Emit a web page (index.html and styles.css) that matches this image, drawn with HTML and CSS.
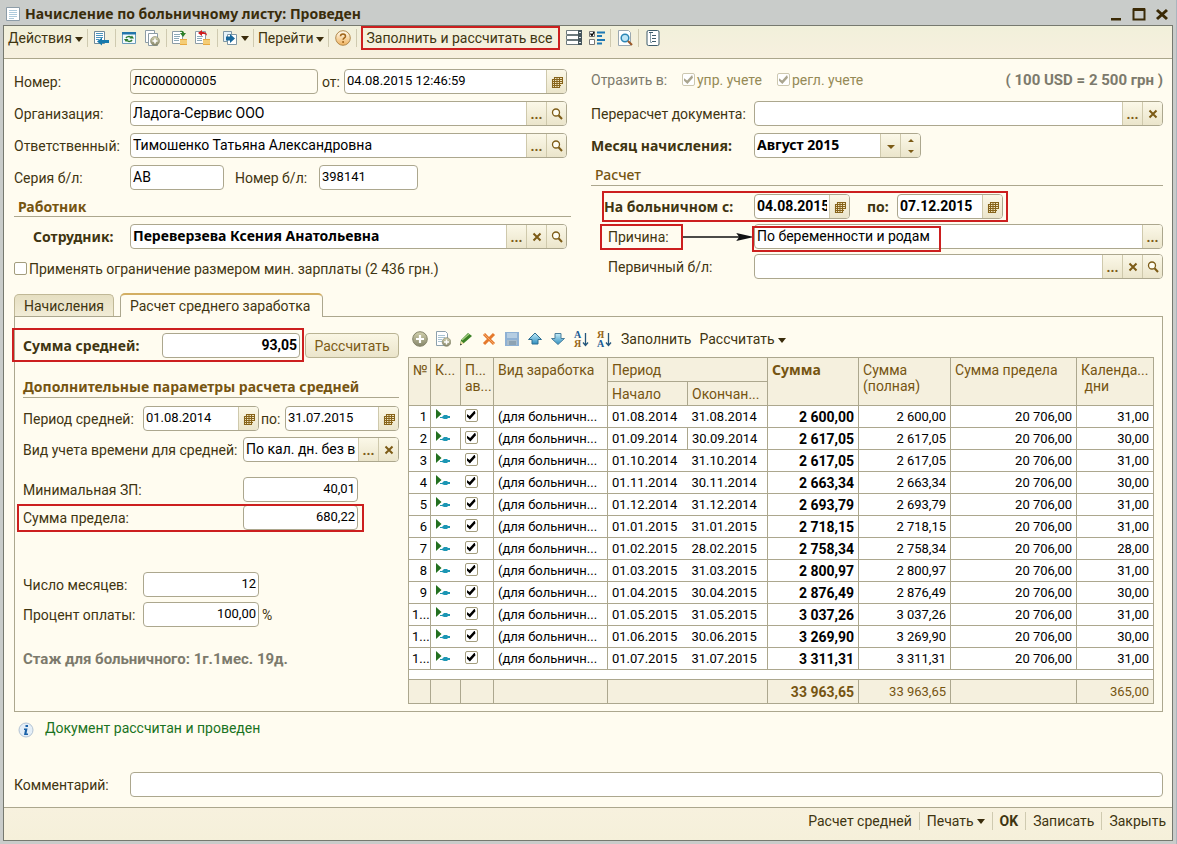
FILE: index.html
```html
<!DOCTYPE html>
<html lang="ru">
<head>
<meta charset="utf-8">
<title>Начисление по больничному листу: Проведен</title>
<link rel="stylesheet" href="styles.css">
</head>
<body>
<svg class="defs" aria-hidden="true">
  <defs>
    <linearGradient id="blue" x1="0" y1="0" x2="0" y2="1"><stop offset="0" stop-color="#c4ecf8"/><stop offset="1" stop-color="#2f8fc0"/></linearGradient>
    <linearGradient id="khaki" x1="0" y1="0" x2="0" y2="1"><stop offset="0" stop-color="#d3d2ae"/><stop offset="1" stop-color="#85856a"/></linearGradient>
    <linearGradient id="peach" x1="0" y1="0" x2="0" y2="1"><stop offset="0" stop-color="#fffdf2"/><stop offset="1" stop-color="#f0b25e"/></linearGradient>
  </defs>
  <symbol id="i-cal" viewBox="0 0 12 12"><path d="M3.500 1h8v8h-2v2h-8V3h2z" fill="#f6ecc9"/><path d="M3 1.500h9M1 3.500h11M1 5.500h11M1 7.500h11M1 9.500h9M1 11.500h8M1.500 3v9M3.500 1v11M6 1v11M8.500 1v11M11.500 1v7" stroke="#86631a" stroke-width="1.100"/></symbol>
  <symbol id="i-lens" viewBox="0 0 12 12"><circle cx="5" cy="4.500" r="3.500" fill="#fffef4" stroke="#7c5b16" stroke-width="1.300"/><path d="M7.500 7.200L11 11" stroke="#7c5b16" stroke-width="2"/></symbol>
  <symbol id="i-x" viewBox="0 0 12 12"><path d="M2.500 2.500l7 7M9.500 2.500l-7 7" stroke="#7c5b16" stroke-width="2"/></symbol>
  <symbol id="i-page" viewBox="0 0 16 16"><path d="M1.500 1.500h13v13h-13z" fill="#fff" stroke="#8d9da8"/><path d="M4 4.500h8M4 6.500h8M4 8.500h8M4 10.500h8M4 12.500h5" stroke="#aecbdc"/></symbol>
  <symbol id="i-mark" viewBox="0 0 16 12"><path d="M1 0l5.500 5L1 10z" fill="#23701f"/><path d="M5 8h2l2-2h3l1 1h2v2h-2l-1 1H9L7 9H5z" fill="#1c96b4"/></symbol>
</svg>
<div class="window">
  <header class="titlebar">
    <svg class="ico"><use href="#i-page"/></svg>
    <h1 class="title">Начисление по больничному листу: Проведен</h1>
    <div class="winctl">
      <button type="button" aria-label="Свернуть"><svg width="14" height="14"><path d="M2 11h10v2.500H2z" fill="#3b2a06"/></svg></button>
      <button type="button" aria-label="Развернуть"><svg width="14" height="14"><path d="M1.500 2.500h11v10h-11z" fill="none" stroke="#3b2a06" stroke-width="2"/><path d="M1 1h12v3H1z" fill="#3b2a06"/></svg></button>
      <button type="button" aria-label="Закрыть окно"><svg width="14" height="14"><path d="M2 3l10 9M12 3L2 12" stroke="#3b2a06" stroke-width="3"/></svg></button>
    </div>
  </header>
  <div class="body">
    <nav class="toolbar">
      <button type="button" class="cmd drop">Действия</button>
      <span class="sep"></span>
      <button type="button" class="tool" aria-label="Записать и закрыть"><svg class="ico" viewBox="0 0 16 16"><path d="M1.500 1.500h10v12h-10z" fill="#fff" stroke="#6f8a99"/><path d="M3 3.500h7M3 5.500h7M3 7.500h7M3 9.500h3" stroke="#4b94bd"/><path d="M4 11.500l5-4V10h7v3H9v2.500z" fill="#1579ad"/></svg></button>
      <span class="sep"></span>
      <button type="button" class="tool" aria-label="Обновить"><svg class="ico" viewBox="0 0 16 16"><path d="M1.500 2.500h13v11h-13z" fill="#f3faff" stroke="#6d9dbb"/><path d="M1 2h14v2.500H1z" fill="#2476ab"/><path d="M5 8c1-1.500 3.500-2 5-.5" fill="none" stroke="#2b7b30" stroke-width="1.500"/><path d="M8.500 8.500H13L11 5.500zM7.500 9H3l2 3z" fill="#2b7b30"/><path d="M11 10c-1 1.500-3.500 2-5 .5" fill="none" stroke="#2b7b30" stroke-width="1.500"/></svg></button>
      <button type="button" class="tool" aria-label="Скопировать"><svg class="ico" viewBox="0 0 16 16"><path d="M1.500.500h9v12h-9z" fill="#fff" stroke="#8c9ca6"/><path d="M4.500 3.500h9v12h-9z" fill="#fff" stroke="#8c9ca6"/><circle cx="11" cy="11" r="4.500" fill="url(#khaki)" stroke="#88886e" stroke-width=".6"/><path d="M11 8.500v5M8.500 11h5" stroke="#fff" stroke-width="1.600"/></svg></button>
      <span class="sep"></span>
      <button type="button" class="tool" aria-label="Провести"><svg class="ico" viewBox="0 0 16 16"><path d="M.500 1.500h10v12H.500z" fill="#fff" stroke="#8c9ca6"/><path d="M2 4.500h6M2 6.500h6M2 8.500h5M2 10.500h5" stroke="#8ba9b8"/><path d="M8 1c3-1 4 1 4 2h2l-3 4-3-4h2c0-1-1-1.500-2-1z" fill="#2c7f27"/><path d="M8 9h7v6H8z" fill="#e8a93f"/><path d="M8 11h7M8 13h7" stroke="#fff0b0"/></svg></button>
      <button type="button" class="tool" aria-label="Отмена проведения"><svg class="ico" viewBox="0 0 16 16"><path d="M.500 1.500h10v12H.500z" fill="#fff" stroke="#8c9ca6"/><path d="M2 6.500h6M2 8.500h5M2 10.500h5" stroke="#8ba9b8"/><path d="M3 3l4-3v2c4 0 5 1 5 4-1-2-2-2-5-2v2z" fill="#cf1d1d"/><path d="M8 9h7v6H8z" fill="#e8a93f"/><path d="M8 11h7M8 13h7" stroke="#fff0b0"/></svg></button>
      <span class="sep"></span>
      <button type="button" class="tool drop" aria-label="Ввести на основании"><svg class="ico" viewBox="0 0 16 16"><path d="M1.500 1.500h8v10h-8z" fill="#e6f2f9" stroke="#7f97a5"/><path d="M5.500 4.500h9v10h-9z" fill="#fff" stroke="#7f97a5"/><path d="M4 6.500h4V4l5 4.500L8 13v-2.500H4z" fill="#17689c"/></svg></button>
      <span class="sep"></span>
      <button type="button" class="cmd drop">Перейти</button>
      <span class="sep"></span>
      <button type="button" class="tool" aria-label="Справка"><svg class="ico" viewBox="0 0 16 16"><circle cx="8" cy="8" r="7.300" fill="url(#peach)" stroke="#b28a4e"/><path d="M5.500 6.200c0-3 5-3 5 0 0 1.700-2.400 1.700-2.400 3.600M8.100 11v2" fill="none" stroke="#a0641a" stroke-width="1.500"/></svg></button>
      <span class="sep"></span>
      <button type="button" class="cmd mark mark-fill">Заполнить и рассчитать все</button>
      <button type="button" class="tool" aria-label="Список"><svg class="ico" viewBox="0 0 16 16"><path d="M.500.500h15v4H.500zM.500 5.500h15v4H.500zM.500 10.500h15v4H.500z" fill="#fff" stroke="#6c797d"/><path d="M12 0h4v5h-4zM12 5h4v5h-4zM12 10h4v5h-4z" fill="#45555c"/><path d="M13 2.500h2M13 7.500h2M13 12.500h2" stroke="#dfe6ea"/></svg></button>
      <button type="button" class="tool" aria-label="Настройка"><svg class="ico" viewBox="0 0 16 16"><path d="M.500 1.500h5v5h-5zM.500 9.500h5v5h-5z" fill="#fff" stroke="#777"/><path d="M1.500 3.500l1.500 2 2-3.500" fill="none" stroke="#000" stroke-width="1.300"/><path d="M8 2.500h8M8 6h5M8 10h8M8 13.500h5" stroke="#1e78b4" stroke-width="2"/></svg></button>
      <span class="sep"></span>
      <button type="button" class="tool" aria-label="Просмотр"><svg class="ico" viewBox="0 0 16 16"><path d="M1.500.500h10l2 2v13h-12z" fill="#fff" stroke="#9aa8b0"/><circle cx="8" cy="8" r="3.800" fill="#bfe6f6" stroke="#2c86b5" stroke-width="1.500"/><path d="M11 11l4 4" stroke="#9c5a2a" stroke-width="2.200"/></svg></button>
      <span class="sep"></span>
      <button type="button" class="tool" aria-label="Структура"><svg class="ico" viewBox="0 0 16 16"><rect x="2" y=".5" width="12" height="15" rx="1.500" fill="#fff" stroke="#3e5c6c"/><path d="M4 2.500h4M7 5.500h4M7 8.500h4M7 11.500h4" stroke="#3e5c6c"/><path d="M5.500 3v9.500H7" fill="none" stroke="#8aa0ac"/></svg></button>
    </nav>

    <main class="content">
      <div class="columns">
        <section class="stack left">
          <div class="row"><label class="lbl" for="num">Номер:</label>
            <span class="field w188 ro"><input id="num" value="ЛС000000005" readonly></span>
            <label class="mid" for="dt">от:</label>
            <span class="field grow"><input id="dt" value="04.08.2015 12:46:59"><button type="button" aria-label="Календарь"><svg><use href="#i-cal"/></svg></button></span>
          </div>
          <div class="row"><label class="lbl" for="org">Организация:</label>
            <span class="field grow text"><input id="org" value="Ладога-Сервис ООО"><button type="button">...</button><button type="button" aria-label="Открыть"><svg><use href="#i-lens"/></svg></button></span>
          </div>
          <div class="row"><label class="lbl" for="resp">Ответственный:</label>
            <span class="field grow text"><input id="resp" value="Тимошенко Татьяна Александровна"><button type="button">...</button><button type="button" aria-label="Открыть"><svg><use href="#i-lens"/></svg></button></span>
          </div>
          <div class="row"><label class="lbl" for="ser">Серия б/л:</label>
            <span class="field w94 text"><input id="ser" value="АВ"></span>
            <label class="lbl-bl" for="bl">Номер б/л:</label>
            <span class="field w99"><input id="bl" value="398141"></span>
          </div>
          <h2 class="group-title strong">Работник</h2>
          <div class="row bold"><label class="lbl indent" for="emp">Сотрудник:</label>
            <span class="field grow text"><input id="emp" value="Переверзева Ксения Анатольевна"><button type="button">...</button><button type="button" aria-label="Очистить"><svg><use href="#i-x"/></svg></button><button type="button" aria-label="Открыть"><svg><use href="#i-lens"/></svg></button></span>
          </div>
          <label class="row check"><input type="checkbox" class="cb">Применять ограничение размером мин. зарплаты (2 436 грн.)</label>
        </section>

        <section class="stack right">
          <div class="row muted"><span class="reflect">Отразить в:</span>
            <label class="cbl"><input type="checkbox" class="cb" checked disabled>упр. учете</label>
            <label class="cbl"><input type="checkbox" class="cb" checked disabled>регл. учете</label>
            <span class="rate">( 100 USD = 2 500 грн )</span>
          </div>
          <div class="row"><label class="lbl" for="rec">Перерасчет документа:</label>
            <span class="field grow"><input id="rec" value=""><button type="button">...</button><button type="button" aria-label="Очистить"><svg><use href="#i-x"/></svg></button></span>
          </div>
          <div class="row bold"><label class="lbl" for="mon">Месяц начисления:</label>
            <span class="field w167 text"><input id="mon" value="Август 2015"><button type="button" aria-label="Выбрать"><svg viewBox="0 0 12 12"><path d="M2 5h8l-4 4z" fill="#7c5b16"/></svg></button><button type="button" aria-label="Изменить"><svg class="spin" viewBox="0 0 12 18"><path d="M3 5h6L6 2zM3 13h6l-3 3z" fill="#7c5b16"/></svg></button></span>
          </div>
          <h2 class="group-title">Расчет</h2>
          <div class="substack">
            <div class="row bold"><div class="mark mark-period"><label class="lbl" for="from">На больничном с:</label>
              <span class="field w96 date"><input id="from" value="04.08.2015"><button type="button" aria-label="Календарь"><svg><use href="#i-cal"/></svg></button></span>
              <label class="to" for="till">по:</label>
              <span class="field w106 date"><input id="till" value="07.12.2015"><button type="button" aria-label="Календарь"><svg><use href="#i-cal"/></svg></button></span></div>
            </div>
            <div class="row"><label class="lbl reason" for="why"><span class="mark mark-reason">Причина:</span></label>
              <svg class="arrow" viewBox="0 0 72 8"><path d="M0 4h60" stroke="#111" stroke-width="1.500"/><path d="M54 0l18 4-18 4 3-4z" fill="#111"/></svg>
              <span class="field grow text mark mark-why"><input id="why" value="По беременности и родам"><button type="button">...</button></span>
            </div>
            <div class="row"><label class="lbl sub" for="prim">Первичный б/л:</label>
              <span class="field grow"><input id="prim" value=""><button type="button">...</button><button type="button" aria-label="Очистить"><svg><use href="#i-x"/></svg></button><button type="button" aria-label="Открыть"><svg><use href="#i-lens"/></svg></button></span>
            </div>
          </div>
        </section>
      </div>

      <div class="tabs"><button type="button" class="tab">Начисления</button><button type="button" class="tab active">Расчет среднего заработка</button></div>
      <div class="panel">
        <section class="params">
          <div class="row bold"><div class="mark mark-avg"><label class="lbl-avg" for="avg">Сумма средней:</label><span class="field grow num date"><input id="avg" value="93,05"></span></div><button type="button" class="btn">Рассчитать</button></div>
          <h2 class="group-title strong extra">Дополнительные параметры расчета средней</h2>
          <div class="row period"><label class="lbl120" for="p1">Период средней:</label><span class="field w116"><input id="p1" value="01.08.2014"><button type="button" aria-label="Календарь"><svg><use href="#i-cal"/></svg></button></span><label class="mid2" for="p2">по:</label><span class="field grow"><input id="p2" value="31.07.2015"><button type="button" aria-label="Календарь"><svg><use href="#i-cal"/></svg></button></span></div>
          <div class="row kind"><label class="lbl220" for="kind">Вид учета времени для средней:</label><span class="field grow text"><input id="kind" value="По кал. дн. без вых. и празд."><button type="button">...</button><button type="button" aria-label="Очистить"><svg><use href="#i-x"/></svg></button></span></div>
          <div class="row minpay"><label class="lbl220" for="min">Минимальная ЗП:</label><span class="field w115 num"><input id="min" value="40,01"></span></div>
          <div class="row limit"><div class="mark mark-limit"><label class="lbl220" for="lim">Сумма предела:</label><span class="field w115 num"><input id="lim" value="680,22"></span></div></div>
          <div class="row months"><label class="lbl120" for="mc">Число месяцев:</label><span class="field w116 num"><input id="mc" value="12"></span></div>
          <div class="row percent"><label class="lbl120" for="pc">Процент оплаты:</label><span class="field w116 num"><input id="pc" value="100,00"></span><span class="pct">%</span></div>
          <p class="seniority">Стаж для больничного: 1г.1мес. 19д.</p>
        </section>

        <section class="grid">
          <div class="gridbar">
            <button type="button" class="tool" aria-label="Добавить"><svg class="ico" viewBox="0 0 16 16"><circle cx="8" cy="8" r="7.300" fill="url(#khaki)" stroke="#84846a"/><path d="M8 4v8M4 8h8" stroke="#fff" stroke-width="2.200"/></svg></button>
            <button type="button" class="tool" aria-label="Добавить копированием"><svg class="ico" viewBox="0 0 16 16"><path d="M1.500.500h9l2 2v12h-11z" fill="#fff" stroke="#8da1ad"/><path d="M3 4.500h7M3 6.500h7M3 8.500h4M3 10.500h4" stroke="#a9c4d2"/><circle cx="11.500" cy="11" r="4.300" fill="url(#khaki)" stroke="#84846a" stroke-width=".7"/><path d="M11.500 8.500v5M9 11h5" stroke="#fff" stroke-width="1.500"/></svg></button>
            <button type="button" class="tool" aria-label="Изменить"><svg class="ico" viewBox="0 0 16 16"><path d="M2 14l1-5 7-7 4 3-8 7z" fill="#3c8226"/><path d="M4 9l7-6" stroke="#a6d080" stroke-width="1.200"/><path d="M2 14l1-4 3 2.500z" fill="#f1dfa8"/><path d="M2 14.500l.5-2 1.500 1z" fill="#222"/></svg></button>
            <button type="button" class="tool" aria-label="Удалить"><svg class="ico" viewBox="0 0 16 16"><path d="M3 3l10 10M13 3L3 13" stroke="#e5792c" stroke-width="3"/><path d="M3 3l10 10" stroke="#f2a567" stroke-width="1"/></svg></button>
            <button type="button" class="tool" aria-label="Записать строку"><svg class="ico" viewBox="0 0 16 16"><path d="M1 1h14v14H1z" fill="#8fb1d4"/><path d="M3 2h10v5H3z" fill="#b5cde2"/><path d="M3 9h10v5H3z" fill="#a9bccb"/><path d="M5 11h7M5 13h7" stroke="#73899b"/></svg></button>
            <button type="button" class="tool" aria-label="Вверх"><svg class="ico" viewBox="0 0 16 16"><path d="M8 2l6.500 6.500H11V13H5V8.500H1.500z" fill="url(#blue)" stroke="#2f6f92"/></svg></button>
            <button type="button" class="tool" aria-label="Вниз"><svg class="ico" viewBox="0 0 16 16"><path d="M8 13.500L1.500 7.500H5v-5h6v5h3.500z" fill="url(#blue)" stroke="#4b7f9c"/></svg></button>
            <button type="button" class="tool" aria-label="Сортировать по возрастанию"><svg class="ico sort" viewBox="0 0 16 20"><text x="1" y="9" class="g ga">А</text><text x="1" y="18" class="g gb">Я</text><path d="M12.500 4v12M10 13.500l2.500 3 2.500-3" fill="none" stroke="#24567c" stroke-width="1.300"/></svg></button>
            <button type="button" class="tool" aria-label="Сортировать по убыванию"><svg class="ico sort" viewBox="0 0 16 20"><text x="1" y="9" class="g gb">Я</text><text x="1" y="18" class="g ga">А</text><path d="M12.500 4v12M10 13.500l2.500 3 2.500-3" fill="none" stroke="#24567c" stroke-width="1.300"/></svg></button>
            <button type="button" class="cmd">Заполнить</button>
            <button type="button" class="cmd drop">Рассчитать</button>
          </div>
          <table class="tbl">
            <colgroup><col class="c1"><col class="c2"><col class="c3"><col class="c4"><col class="c5"><col class="c5"><col class="c7"><col class="c8"><col class="c9"><col class="c10"></colgroup>
            <thead>
              <tr><th rowspan="2">№</th><th rowspan="2">К...</th><th rowspan="2">П...<br>ав...</th><th rowspan="2">Вид заработка</th><th colspan="2">Период</th><th rowspan="2" class="b">Сумма</th><th rowspan="2">Сумма<br>(полная)</th><th rowspan="2">Сумма предела</th><th rowspan="2">Календа...<br>&nbsp;дни</th></tr>
              <tr><th>Начало</th><th>Окончан...</th></tr>
            </thead>
            <tbody id="rows"></tbody>
            <tfoot>
              <tr class="blank"><td colspan="10"></td></tr>
              <tr class="total"><td></td><td></td><td></td><td></td><td colspan="2"></td><td class="r sum">33 963,65</td><td class="r">33 963,65</td><td></td><td class="r">365,00</td></tr>
            </tfoot>
          </table>
        </section>
      </div>

      <div class="status"><svg class="ico" viewBox="0 0 16 16"><circle cx="8" cy="8" r="7" fill="#e4eef7" stroke="#b3c3d3"/><path d="M7.500 3h2.500v2H7.500zM6 6.500h3.500l-1 5H10V13H6l1-5H6z" fill="#1b62a8"/></svg><span>Документ рассчитан и проведен</span></div>
      <div class="row comment"><label class="lbl" for="com">Комментарий:</label><span class="field grow"><input id="com" value=""></span></div>
    </main>

    <footer class="footer">
      <button type="button" class="cmd">Расчет средней</button><span class="sep"></span>
      <button type="button" class="cmd drop">Печать</button><span class="sep"></span>
      <button type="button" class="cmd ok">OK</button><span class="sep"></span>
      <button type="button" class="cmd">Записать</button><span class="sep"></span>
      <button type="button" class="cmd">Закрыть</button>
    </footer>
  </div>
</div>
<script src="rows.js"></script>
</body>
</html>
```
FILE: styles.css
```css
*, *::before, *::after { box-sizing: border-box; }
body { margin: 0; background: #c9ccca; color: #3f3511; font: 14px/16px Roboto, "Liberation Sans", sans-serif; }
button, input { font: inherit; color: inherit; margin: 0; }
button { background: none; border: 0; padding: 0; }
h1, h2, p { margin: 0; }
.defs { position: absolute; width: 0; height: 0; }
.ico { width: 16px; height: 16px; flex: none; display: block; }
.b, .bold { font-family: "Noto Sans", sans-serif; font-weight: bold; }

.window { min-height: 100vh; display: flex; flex-direction: column; padding: 1px 3px 3px; background: #c9ccca; border-right: 1px solid #aab5bd; }
.titlebar { height: 24px; display: flex; align-items: center; gap: 4px; padding: 2px 4px 0 2px; }
.title { font: bold 14px/16px "Noto Sans", sans-serif; color: #3a2c0b; flex: 1; }
.winctl { display: flex; gap: 9px; }
.winctl svg { display: block; }
.body { flex: 1; display: flex; flex-direction: column; border: 1px solid #76796f; background: #fffcf0; }

.toolbar { height: 33px; display: flex; align-items: center; gap: 4px; padding: 0 4px 8px; border-bottom: 1px solid #aba68c; background: linear-gradient(#f1f0da, #f7f0df); }
.sep { width: 1px; height: 18px; background: #cfcab0; flex: none; }
.cmd { white-space: nowrap; }
.tool { width: 19px; display: flex; justify-content: center; align-items: center; }
.drop::after { content: ""; display: inline-block; vertical-align: middle; margin-left: 3px; border: 4px solid transparent; border-top: 5px solid #3a2c0b; border-bottom: 0; flex: none; }
.tool.drop { width: auto; }

.mark { position: relative; }
.mark::after { content: ""; position: absolute; border: 2px solid #cc1f1f; pointer-events: none; }
.mark-fill { margin: 0 8px 0 5px; }
.mark-fill::after { inset: -4px -8px -4px -5px; }

.content { flex: 1; padding: 10px 9px 10px 10px; display: flex; flex-direction: column; }
.columns { display: grid; grid-template-columns: 557fr 572fr; gap: 20px; }
.stack { display: flex; flex-direction: column; gap: 7px; min-width: 0; }
.substack { display: flex; flex-direction: column; gap: 5px; padding-top: 1px; }
.row { display: flex; align-items: center; height: 25px; }
.left .row { padding-right: 4px; }
.lbl { width: 116px; flex: none; white-space: nowrap; }
.right .lbl { width: 163px; }
.lbl.indent { padding-left: 19px; }
.right .lbl.sub { padding-left: 17px; }
.field { display: flex; height: 25px; border: 1px solid #aca78e; border-radius: 4px; background: #fff; min-width: 0; flex: none; }
.field.ro { background: #fffcf0; }
.field > input { flex: 1; width: 0; min-width: 0; border: 0; outline: 0; background: none; padding: 0 2px 2px; font-size: 13px; color: #000; }
.field.text > input { font-size: 14px; }
.field.date > input { font-family: Roboto, sans-serif; font-size: 14px; }
.field > button { width: 20px; flex: none; border-left: 1px solid #cfc9ac; background: linear-gradient(#fbf8e8, #ebe5cb); color: #7c5b16; font: bold 14px/16px Roboto, sans-serif; display: flex; align-items: center; justify-content: center; }
.field > button:last-child { border-radius: 0 3px 3px 0; }
.field svg { width: 12px; height: 12px; }
.field svg.spin { height: 18px; }
.field.grow { flex: 1; }
.num > input { text-align: right; }
.w188 { width: 188px; }
.w94 { width: 94px; }
.w96 { width: 96px; }
.w99 { width: 99px; }
.w106 { width: 106px; }
.w115 { width: 115px; }
.w116 { width: 116px; }
.w167 { width: 167px; }
.mid { width: 26px; padding-left: 4px; }
.mid2 { width: 26px; padding-left: 2px; }
.lbl-bl { width: 95px; padding-left: 11px; }
.group-title { height: 20px; border-bottom: 1px solid #aca78e; padding-left: 4px; font: 500 14px/20px "Noto Sans", sans-serif; color: #765512; }
.group-title.strong { font-weight: bold; }
.right .group-title { height: 21px; }

.cb { appearance: none; width: 13px; height: 13px; border: 1px solid #a39d7e; border-radius: 2px; background: #fff; display: inline-block; flex: none; position: relative; }
.cb:checked::before { content: ""; position: absolute; inset: 1px; background: #000; clip-path: polygon(0 35%, 35% 62%, 90% 0, 100% 30%, 38% 100%, 0 65%); }
.cb:disabled { border-color: #cdc8b0; }
.cb:disabled::before { background: #aaa58f; }
.check { gap: 2px; }
.muted { color: #7c7a6c; padding-bottom: 4px; }
.reflect { width: 91px; }
.cbl { display: flex; align-items: center; gap: 2px; margin-right: 15px; color: #958a56; }
.rate { margin-left: auto; font-size: 15px; font-weight: bold; }
.mark-period { display: flex; align-items: center; margin-left: 13px; }
.right .mark-period .lbl { width: 150px; }
.mark-period::after { inset: -3px -5px -3px -2px; }
.to { width: 47px; padding-left: 17px; }
.right .reason { width: 92px; padding-left: 17px; }
.mark-reason::after { inset: -5px -14px -5px -8px; }
.arrow { width: 71px; height: 8px; flex: none; }
.mark-why::after { width: 189px; height: 26px; left: -3px; top: 1px; }

.tabs { display: flex; align-items: flex-end; gap: 6px; margin-top: 12px; height: 23px; }
.tab { height: 22px; padding: 0 9px; border: 1px solid #c0b896; border-bottom: 0; border-radius: 5px 5px 0 0; background: linear-gradient(#e6dfc2, #f1ecd6); }
.tab.active { height: 24px; margin-bottom: -1px; padding-right: 12px; border-color: #aca78e; border-top: 2px solid #d3ae62; background: #fffcf0; position: relative; }
.panel { display: flex; gap: 9px; border: 1px solid #aca78e; padding: 12px 9px 7px 8px; }
.params { width: 376px; flex: none; display: flex; flex-direction: column; margin-top: 4px; }
.params .row { flex: none; }
.mark-avg { display: flex; align-items: center; width: 277px; }
.mark-avg::after { inset: -5px -4px -4px -11px; }
.lbl-avg { width: 139px; }
.btn { flex: 1; height: 25px; margin-left: 5px; border: 1px solid #b9b393; border-radius: 4px; background: linear-gradient(#faf6e4, #ebe5cb); color: #7c5b16; font: 14px/16px Roboto, sans-serif; }
.group-title.extra { margin-top: 19px; padding: 0; height: 21px; white-space: nowrap; }
.lbl120 { width: 120px; flex: none; white-space: nowrap; }
.lbl220 { width: 220px; flex: none; white-space: nowrap; }
.period { margin-top: 8px; }
.kind { margin-top: 6px; }
.minpay { margin-top: 15px; }
.limit { margin-top: 3px; }
.mark-limit { display: flex; align-items: center; }
.mark-limit::after { inset: -1px -6px -2px -6px; }
.months { margin-top: 42px; }
.percent { margin-top: 5px; }
.pct { padding-left: 3px; }
.seniority { margin-top: 24px; font-size: 15px; font-weight: bold; color: #7c7a6c; }

.grid { flex: 1; min-width: 0; }
.gridbar { display: flex; align-items: center; gap: 4px; height: 20px; margin: 0 0 8px 2px; }
.gridbar .cmd { margin-left: 4px; }
.ico.sort { height: 20px; }
.g { font: bold 10px "Liberation Serif", serif; }
.ga { fill: #1b5a93; }
.gb { fill: #97661a; }
.tbl { width: 100%; table-layout: fixed; border-collapse: collapse; border: 1px solid #aca78e; background: #fff; font-size: 13px; color: #000; }
.c1 { width: 22px; }
.c2 { width: 30px; }
.c3 { width: 33px; }
.c4 { width: 114px; }
.c5 { width: 80px; }
.c7 { width: 91px; }
.c8 { width: 92px; }
.c9 { width: 126px; }
.c10 { width: 77px; }
.tbl th { height: 24px; padding: 4px 0 0 4px; text-align: left; vertical-align: top; font-size: 14px; font-weight: normal; line-height: 16px; color: #765512; background: #f5f0de; border: 1px solid #aca78e; white-space: nowrap; overflow: hidden; }
.tbl th.b { font-weight: bold; }
.tbl td { height: 22px; padding: 0 4px; border: 1px solid #aca78e; white-space: nowrap; overflow: hidden; }
.tbl .open { border-right: 0; }
.tbl .open + td { border-left: 0; }
.tbl .r { text-align: right; }
.tbl td.sum { font-size: 14px; font-weight: bold; }
.tbl td.no { padding: 0 3px; text-align: right; }
.tbl td .ico { height: 12px; margin-bottom: 3px; }
.tbl .cb { display: block; margin-bottom: 3px; }
.tbl .blank td { height: 10px; }
.tbl .total td { height: 24px; background: #f5f0de; color: #765512; }

.status { display: flex; align-items: flex-end; gap: 11px; margin: 8px 0 0 4px; height: 18px; color: #1a7322; }
.status span { align-self: flex-start; }
.comment { margin-top: auto; }
.footer { height: 33px; border-top: 1px solid #aca78e; background: linear-gradient(#f7f1de, #f5f0da); display: flex; align-items: center; justify-content: flex-end; gap: 7px; padding: 0 6px 7px; }
.ok { font-weight: bold; }
```
FILE: rows.js
```js
const data = [
  ["1", "01.08.2014", "31.08.2014", "2 600,00", "31,00"],
  ["2", "01.09.2014", "30.09.2014", "2 617,05", "30,00"],
  ["3", "01.10.2014", "31.10.2014", "2 617,05", "31,00"],
  ["4", "01.11.2014", "30.11.2014", "2 663,34", "30,00"],
  ["5", "01.12.2014", "31.12.2014", "2 693,79", "31,00"],
  ["6", "01.01.2015", "31.01.2015", "2 718,15", "31,00"],
  ["7", "01.02.2015", "28.02.2015", "2 758,34", "28,00"],
  ["8", "01.03.2015", "31.03.2015", "2 800,97", "31,00"],
  ["9", "01.04.2015", "30.04.2015", "2 876,49", "30,00"],
  ["1...", "01.05.2015", "31.05.2015", "3 037,26", "31,00"],
  ["1...", "01.06.2015", "30.06.2015", "3 269,90", "30,00"],
  ["1...", "01.07.2015", "31.07.2015", "3 311,31", "31,00"]
];
document.getElementById("rows").innerHTML = data.map(([n, from, to, sum, days], i) => {
  const open = i === 1 ? "" : "open";
  return `<tr><td class="no">${n}</td><td class="${open}"><svg class="ico"><use href="#i-mark"/></svg></td>` +
    `<td><input type="checkbox" class="cb" checked aria-label="Строка ${i + 1}"></td><td>(для больничн...</td>` +
    `<td class="${open}">${from}</td><td>${to}</td><td class="r sum">${sum}</td><td class="r">${sum}</td>` +
    `<td class="r">20 706,00</td><td class="r">${days}</td></tr>`;
}).join("");
```
